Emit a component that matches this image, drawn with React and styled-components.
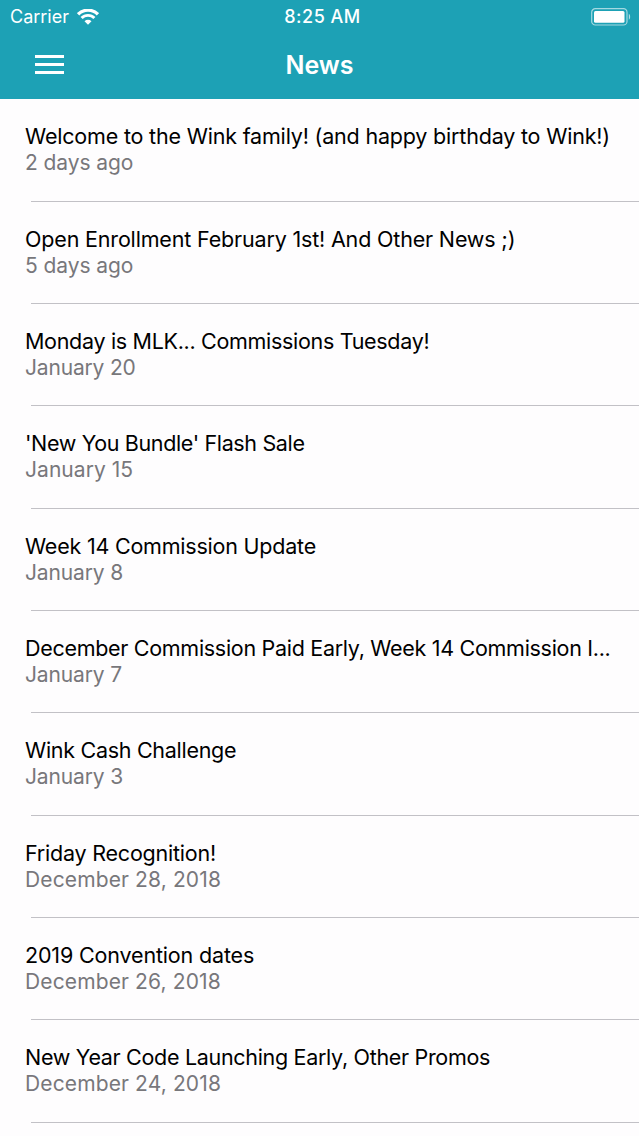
import React from 'react'
import styled, {createGlobalStyle} from 'styled-components'

const GlobalStyle = createGlobalStyle`
  * {
    box-sizing: border-box;
  }

  body {
    margin: 0;
    background: #fefdfe;
    font-family: Inter, "Liberation Sans", sans-serif;
  }
`

const Screen = styled.div`
  width: 100%;
  height: 1136px;
  overflow: hidden;
`

const Header = styled.header`
  height: 98.6px;
  background-color: #1da1b5;
  color: #fff;
`

const StatusBar = styled.div`
  display: grid;
  grid-template-columns: 1fr auto 1fr;
  align-items: center;
  height: 32px;
  padding: 0 8px 0 10px;
`

const Carrier = styled.div`
  display: flex;
  align-items: center;
  gap: 8px;
  font-size: 18px;
  line-height: 32px;
`

const Clock = styled.div`
  padding: 1px 0 0 4px;
  font-size: 18px;
  font-weight: 500;
  line-height: 32px;
  letter-spacing: 0.5px;
`

const Battery = styled.svg`
  justify-self: end;
`

const NavBar = styled.div`
  display: grid;
  grid-template-columns: 1fr auto 1fr;
  align-items: center;
  height: 65px;
  padding: 0 35px;
`

const MenuButton = styled.button`
  display: flex;
  flex-direction: column;
  gap: 5px;
  width: 29px;
  padding: 0;
  border: 0;
  background: none;

& span {
  height: 3px;
  background-color: #fff;
}
`

const Title = styled.h1`
  margin: 0;
  padding-top: 1px;
  font-size: 25px;
  font-weight: 600;
  line-height: 30px;
`

const List = styled.ul`
  margin: 0;
  padding: 0;
  list-style: none;
`

const Row = styled.li`
  height: 102.33px;
  padding: 24.8px 25px 0 25px;
`

const Headline = styled.h2`
  margin: 0;
  overflow: hidden;
  color: #000;
  font-size: 21.5px;
  font-weight: 400;
  line-height: 26px;
  letter-spacing: ${({$spacing}) => $spacing}px;
  white-space: nowrap;
  text-overflow: ellipsis;
`

const PostedAt = styled.p`
  margin: 0;
  color: #78777b;
  font-size: 21px;
  line-height: 27px;
  letter-spacing: ${({$spacing}) => $spacing}px;
`

const Divider = styled.div`
  height: 1px;
  margin: 24.2px -25px 0 6px;
  background-color: #c2c1c6;
`

const news = [
    {title: 'Welcome to the Wink family! (and happy birthday to Wink!)', date: '2 days ago', tracking: [-0.19, -0.08]},
    {title: 'Open Enrollment February 1st! And Other News ;)', date: '5 days ago', tracking: [-0.17, -0.08]},
    {title: 'Monday is MLK... Commissions Tuesday!', date: 'January 20', tracking: [-0.31, -0.18]},
    {title: "'New You Bundle' Flash Sale", date: 'January 15', tracking: [-0.36, 0.05]},
    {title: 'Week 14 Commission Update', date: 'January 8', tracking: [-0.22, -0.13]},
    {title: 'December Commission Paid Early, Week 14 Commission I...', date: 'January 7', tracking: [-0.3, -0.13]},
    {title: 'Wink Cash Challenge', date: 'January 3', tracking: [-0.29, -0.13]},
    {title: 'Friday Recognition!', date: 'December 28, 2018', tracking: [-0.22, 0.13]},
    {title: '2019 Convention dates', date: 'December 26, 2018', tracking: [-0.16, 0.13]},
    {title: 'New Year Code Launching Early, Other Promos', date: 'December 24, 2018', tracking: [-0.31, 0.13]},
]

const WifiIcon = () => (
    <svg width='22' height='16' viewBox='0 0 22 16' fill='none' stroke='#fff'>
        <path d='M1.1 5.3a14 14 0 0 1 19.8 0' strokeWidth='3.3' />
        <path d='M4.6 9a9 9 0 0 1 12.8 0' strokeWidth='2.9' />
        <path d='M11 15.8L7.5 12.3a5 5 0 0 1 7 0z' fill='#fff' stroke='none' />
    </svg>
)

const BatteryIcon = () => (
    <Battery width='40' height='18' viewBox='0 0 40 18'>
        <rect x='0.7' y='0.7' width='35.3' height='16.3' rx='3.6' fill='none' stroke='#fff' strokeOpacity='0.6' strokeWidth='1.2' />
        <rect x='3' y='3' width='30.5' height='11.7' rx='1.5' fill='#fff' />
        <path d='M37.8 5.8c1.8 0.8 1.8 5.2 0 6z' fill='#fff' fillOpacity='0.65' />
    </Battery>
)

const NewsItem = ({title, date, tracking}) => (
    <Row>
        <Headline $spacing={tracking[0]}>{title}</Headline>
        <PostedAt $spacing={tracking[1]}>{date}</PostedAt>
        <Divider />
    </Row>
)

const App = () => {
    return (
        <Screen>
            <GlobalStyle />
            <Header>
                <StatusBar>
                    <Carrier>
                        Carrier
                        <WifiIcon />
                    </Carrier>
                    <Clock>8:25 AM</Clock>
                    <BatteryIcon />
                </StatusBar>
                <NavBar>
                    <MenuButton aria-label='Menu'>
                        <span />
                        <span />
                        <span />
                    </MenuButton>
                    <Title>News</Title>
                </NavBar>
            </Header>
            <List>
                {news.map((item) => (
                    <NewsItem key={item.title} {...item} />
                ))}
            </List>
        </Screen>
    )
}

export default App
